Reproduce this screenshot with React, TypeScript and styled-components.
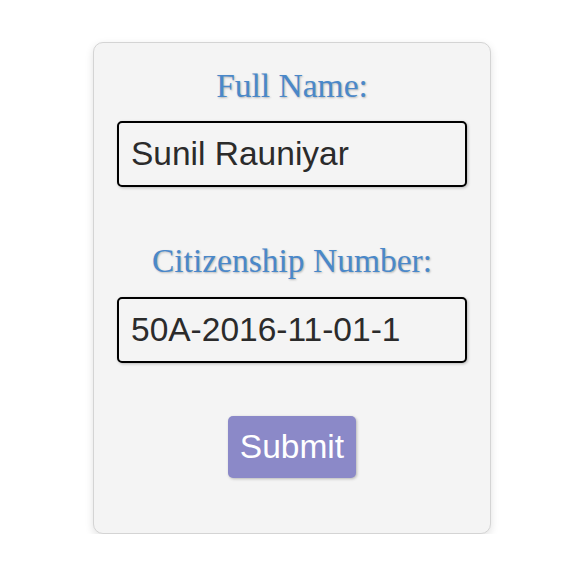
import React, { useState } from 'react';
import styled, { createGlobalStyle } from 'styled-components';

const GlobalStyle = createGlobalStyle`
  html, body {
    margin: 0;
    padding: 0;
    background: #ffffff;
  }
  body {
    font-family: 'Liberation Sans', Arial, sans-serif;
  }
`;

const Page = styled.div`
  display: flex;
  justify-content: center;
  padding-top: 42px;
`;

const Card = styled.form`
  width: 398px;
  box-sizing: border-box;
  display: flex;
  flex-direction: column;
  align-items: center;
  padding: 24px 23px 55px;
  background-color: #f4f4f4;
  border: 1px solid #d4d4d4;
  border-radius: 10px;
  box-shadow: 0 3px 8px rgba(0, 0, 0, 0.12);
`;

const Field = styled.div<{ $last?: boolean }>`
  width: 100%;
  display: flex;
  flex-direction: column;
  align-items: center;
  gap: ${(p) => (p.$last ? '18px' : '17px')};
  margin-bottom: ${(p) => (p.$last ? '53px' : '55px')};
`;

const Label = styled.label`
  font-family: 'Liberation Serif', 'Times New Roman', serif;
  font-size: 33.5px;
  line-height: 37px;
  color: #4a88c9;
  text-shadow: 1px 1px 2px rgba(0, 0, 0, 0.25);
`;

const Input = styled.input`
  width: 100%;
  box-sizing: border-box;
  height: 66px;
  padding: 0 12px;
  font-family: 'Liberation Sans', Arial, sans-serif;
  font-size: 33.5px;
  color: #2b2b2b;
  background-color: #f4f4f4;
  border: 2px solid #000;
  border-radius: 5px;
  box-shadow: 1px 1px 3px rgba(0, 0, 0, 0.25);
  outline: none;
`;

const SubmitButton = styled.button`
  height: 62px;
  padding: 0 12px;
  font-family: 'Liberation Sans', Arial, sans-serif;
  font-size: 33.5px;
  color: #ffffff;
  background-color: #8b89c8;
  border: none;
  border-radius: 5px;
  box-shadow: 1px 1px 3px rgba(0, 0, 0, 0.25);
  cursor: pointer;
`;

export default function App() {
  const [name, setName] = useState('Sunil Rauniyar');
  const [citizenship, setCitizenship] = useState('50A-2016-11-01-1');

  return (
    <>
      <GlobalStyle />
      <Page>
        <Card onSubmit={(e) => e.preventDefault()}>
          <Field>
            <Label htmlFor='fullname'>Full Name:</Label>
            <Input
              id='fullname'
              value={name}
              onChange={({ target }) => setName(target.value)}
            />
          </Field>
          <Field $last>
            <Label htmlFor='citizenship'>Citizenship Number:</Label>
            <Input
              id='citizenship'
              value={citizenship}
              onChange={({ target }) => setCitizenship(target.value)}
            />
          </Field>
          <SubmitButton type='submit'>Submit</SubmitButton>
        </Card>
      </Page>
    </>
  );
}
